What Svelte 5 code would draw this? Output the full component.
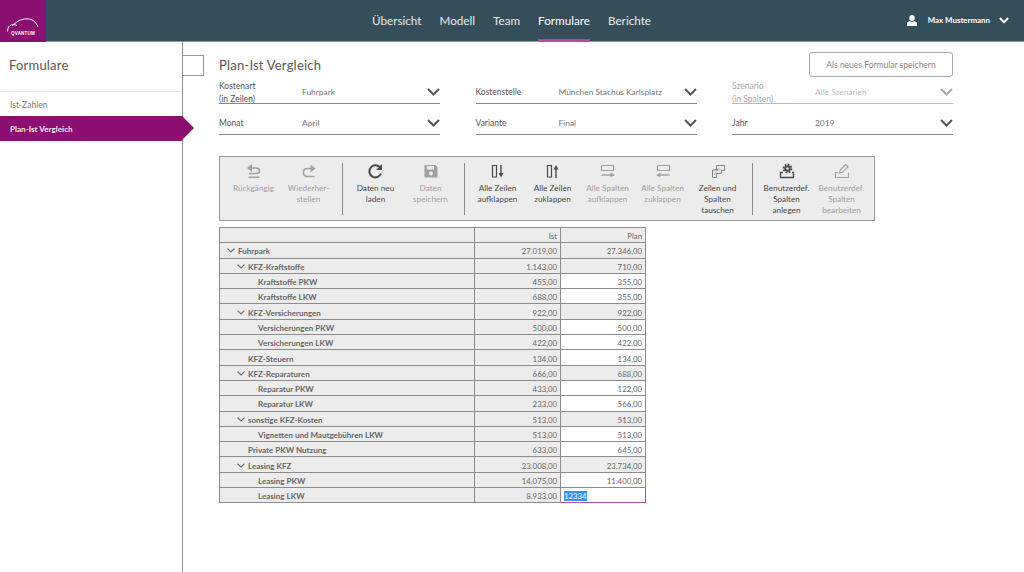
<script>
  const nav = ["Übersicht", "Modell", "Team", "Formulare", "Berichte"];

  const fields = [
    { label: "Kostenart", sub: "(in Zeilen)", value: "Fuhrpark" },
    { label: "Kostenstelle", value: "München Stachus Karlsplatz" },
    { label: "Szenario", sub: "(in Spalten)", value: "Alle Szenarien", off: true },
    { label: "Monat", value: "April" },
    { label: "Variante", value: "Final" },
    { label: "Jahr", value: "2019" }
  ];

  const groups = [
    [
      { icon: "undo", lines: ["Rückgängig"], off: true },
      { icon: "redo", lines: ["Wiederher-", "stellen"], off: true }
    ],
    [
      { icon: "reload", lines: ["Daten neu", "laden"] },
      { icon: "save", lines: ["Daten", "speichern"], off: true }
    ],
    [
      { icon: "rowsOpen", lines: ["Alle Zeilen", "aufklappen"] },
      { icon: "rowsClose", lines: ["Alle Zeilen", "zuklappen"] },
      { icon: "colsOpen", lines: ["Alle Spalten", "aufklappen"], off: true },
      { icon: "colsClose", lines: ["Alle Spalten", "zuklappen"], off: true },
      { icon: "swap", lines: ["Zeilen und", "Spalten", "tauschen"] }
    ],
    [
      { icon: "gear", lines: ["Benutzerdef.", "Spalten", "anlegen"] },
      { icon: "pencil", lines: ["Benutzerdef.", "Spalten", "bearbeiten"], off: true }
    ]
  ];

  const rows = [
    { name: "Fuhrpark", level: 0, open: true, ist: "27.019,00", plan: "27.346,00" },
    { name: "KFZ-Kraftstoffe", level: 1, open: true, ist: "1.143,00", plan: "710,00" },
    { name: "Kraftstoffe PKW", level: 2, ist: "455,00", plan: "355,00", edit: true },
    { name: "Kraftstoffe LKW", level: 2, ist: "688,00", plan: "355,00", edit: true },
    { name: "KFZ-Versicherungen", level: 1, open: true, ist: "922,00", plan: "922,00" },
    { name: "Versicherungen PKW", level: 2, ist: "500,00", plan: "500,00", edit: true },
    { name: "Versicherungen LKW", level: 2, ist: "422,00", plan: "422,00", edit: true },
    { name: "KFZ-Steuern", level: 1, ist: "134,00", plan: "134,00", edit: true },
    { name: "KFZ-Reparaturen", level: 1, open: true, ist: "666,00", plan: "688,00" },
    { name: "Reparatur PKW", level: 2, ist: "433,00", plan: "122,00", edit: true },
    { name: "Reparatur LKW", level: 2, ist: "233,00", plan: "566,00", edit: true },
    { name: "sonstige KFZ-Kosten", level: 1, open: true, ist: "513,00", plan: "513,00" },
    { name: "Vignetten und Mautgebühren LKW", level: 2, ist: "513,00", plan: "513,00", edit: true },
    { name: "Private PKW Nutzung", level: 1, ist: "633,00", plan: "645,00", edit: true },
    { name: "Leasing KFZ", level: 1, open: true, ist: "23.008,00", plan: "23.734,00" },
    { name: "Leasing PKW", level: 2, ist: "14.075,00", plan: "11.400,00", edit: true },
    { name: "Leasing LKW", level: 2, ist: "8.933,00", active: "12334" }
  ];
</script>

<div class="page">
  <header class="topbar">
    <div class="logo">
      <svg width="32" height="14" viewBox="0 0 32 14" fill="none" stroke="#fff" stroke-width="1">
        <path d="M.6 13.500C.6 9.500 2 7.500 4.500 7c2-.4 4-.2 5.500.5" />
        <path d="M5 7.500C9 5 12 1 20 .8c5-.1 9 3.200 11 8" />
      </svg>
      <span>QVANTUM</span>
    </div>
    <nav class="mainnav">
      {#each nav as item}
        <a class:current={item === "Formulare"} href="#top">{item}</a>
      {/each}
    </nav>
    <div class="user">
      <svg width="10" height="11" viewBox="0 0 10 11" fill="#fff">
        <ellipse cx="5" cy="3" rx="2.700" ry="3" />
        <path d="M0 11V8.500C0 7 1.500 6.500 3 6.200c1.200.8 2.800.8 4 0C8.500 6.500 10 7 10 8.500V11z" />
      </svg>
      <b>Max Mustermann</b>
      <svg class="userchev" width="10" height="7" viewBox="0 0 10 7" fill="none" stroke="#fff" stroke-width="1.800">
        <path d="M.8 1l4.200 4.200L9.200 1" />
      </svg>
    </div>
  </header>

  <div class="body">
    <aside class="sidebar">
      <h2>Formulare</h2>
      <ul>
        <li>Ist-Zahlen</li>
        <li class="active">Plan-Ist Vergleich</li>
      </ul>
    </aside>

    <div class="stub"></div>

    <main class="content">
      <div class="titlerow">
        <h1>Plan-Ist Vergleich</h1>
        <button type="button" class="savebtn">Als neues Formular speichern</button>
      </div>

      <div class="fields">
        {#each fields as f}
          <div class="field" class:off={f.off}>
            <div class="flabel" class:two={f.sub}>{f.label}{#if f.sub}<br />{f.sub}{/if}</div>
            <div class="fvalue">{f.value}</div>
            <svg width="13" height="8" viewBox="0 0 13 8" fill="none" stroke="currentColor" stroke-width="2">
              <path d="M1 1l5.500 5.500L12 1" />
            </svg>
          </div>
        {/each}
      </div>

      <div class="toolbar">
        {#each groups as group, g}
          {#if g > 0}<div class="sep" class:wide={g === 3}></div>{/if}
          {#each group as tool}
            <div class="tool" class:off={tool.off}>
              <svg width="18" height="16" viewBox="0 0 18 16" fill="none" stroke="currentColor" stroke-width="1.200">
                {#if tool.icon === "undo"}
                  <path d="M5 5h6.500c2 0 3 1 3 2.700s-1 2.800-3 2.800H4" stroke-width="1.600" />
                  <path d="M7 1v8L2 5z" fill="currentColor" stroke="none" />
                  <path d="M3.500 14.300h11" stroke-width="1.400" />
                {:else if tool.icon === "redo"}
                  <path d="M12.500 5.500H7.500c-2.800 0-4 1.600-4 4s1.200 4 4 4h7" stroke-width="1.600" />
                  <path d="M10.500 1.500v8L15.500 5.500z" fill="currentColor" stroke="none" />
                {:else if tool.icon === "reload"}
                  <path d="M14 10.500A6 6 0 1 1 12.800 4.300" stroke-width="2" />
                  <path d="M15 1v6H9z" fill="currentColor" stroke="none" />
                {:else if tool.icon === "save"}
                  <path d="M2.500 2h11l2 2v10.500h-13z" fill="currentColor" stroke="none" />
                  <path d="M5 3h7v3.500H5z" fill="#ececec" stroke="none" />
                  <circle cx="9" cy="10.500" r="2" fill="#ececec" stroke="none" />
                {:else if tool.icon === "rowsOpen"}
                  <path d="M3.500 2.500h4v11.500h-4z" />
                  <path d="M12 2v10" stroke-width="1.400" />
                  <path d="M9.500 10h5L12 14.500z" fill="currentColor" stroke="none" />
                {:else if tool.icon === "rowsClose"}
                  <path d="M3.500 2.500h4v11.500h-4z" />
                  <path d="M12 5v10" stroke-width="1.400" />
                  <path d="M9.500 6.500h5L12 2z" fill="currentColor" stroke="none" />
                {:else if tool.icon === "colsOpen"}
                  <path d="M2.500 2.500h12v5h-12z" />
                  <path d="M2.500 12h10" stroke-width="1.400" />
                  <path d="M11.500 9.500v5L16 12z" fill="currentColor" stroke="none" />
                {:else if tool.icon === "colsClose"}
                  <path d="M3.500 2.500h12v5h-12z" />
                  <path d="M5.500 12h10" stroke-width="1.400" />
                  <path d="M6.500 9.500v5L2 12z" fill="currentColor" stroke="none" />
                {:else if tool.icon === "swap"}
                  <g stroke="#777" stroke-width=".9">
                    <path d="M7.500 7V2.500h8v5h-3v3h-5" />
                    <path d="M7.500 7h-4v7.500h4v-4" />
                    <path d="M7.500 7l5 0M9.500 5.500l-4 6" stroke-dasharray="1.200 .8" />
                  </g>
                {:else if tool.icon === "gear"}
                  <circle cx="9.500" cy="5.500" r="4" stroke-width="1.800" stroke-dasharray="1.800 1.300" />
                  <circle cx="9.500" cy="5.500" r="3.300" fill="currentColor" stroke="none" />
                  <circle cx="9.500" cy="5.500" r="1.200" fill="#ececec" stroke="none" />
                  <path d="M5 9.500H2.500v5h13v-5H14" stroke-width="1.300" />
                {:else}
                  <path d="M5 9.500H2.500v5h13v-5" />
                  <path d="M6.500 10l.8-3L12.500 1.500l2.500 2.300-5.500 5.500z" />
                {/if}
              </svg>
              {#each tool.lines as line}<span>{line}</span>{/each}
            </div>
          {/each}
        {/each}
      </div>

      <table class="grid">
        <colgroup><col class="c1" /><col class="c2" /><col class="c3" /></colgroup>
        <thead>
          <tr><th></th><th>Ist</th><th>Plan</th></tr>
        </thead>
        <tbody>
          {#each rows as r}
            <tr>
              <td class="name l{r.level}">
                {#if r.level < 2}
                  <span class="slot">
                    {#if r.open}
                      <svg width="8" height="5" viewBox="0 0 8 5" fill="none" stroke="currentColor" stroke-width="1.100">
                        <path d="M.5.700L4 4 7.500.700" />
                      </svg>
                    {/if}
                  </span>
                {/if}{r.name}
              </td>
              <td>{r.ist}</td>
              {#if r.active}
                <td class="cur"><span>{r.active}</span></td>
              {:else}
                <td class:edit={r.edit}>{r.plan}</td>
              {/if}
            </tr>
          {/each}
        </tbody>
      </table>
    </main>
  </div>
</div>

<style>
  :global(body) {
    margin: 0;
    background: #fff;
    font-family: "Lato", "Noto Sans", sans-serif;
    color: #555;
  }

  .page {
    width: 1024px;
    height: 572px;
    display: flex;
    flex-direction: column;
    overflow: hidden;
  }

  .topbar {
    height: 41px;
    flex: none;
    display: flex;
    align-items: stretch;
    background: #354e5c;
    border-bottom: 1px solid #8a9aa3;
    position: relative;
  }

  .logo {
    width: 46px;
    height: 42px;
    background: #8a0f70;
    display: flex;
    flex-direction: column;
    align-items: center;
    padding-top: 18px;
    box-sizing: border-box;
    color: #fff;
  }

  .logo span {
    font-family: "Liberation Sans", sans-serif;
    font-size: 4.500px;
    font-weight: 700;
    line-height: 5px;
    letter-spacing: 0.2px;
    margin-top: -1px;
  }

  .mainnav {
    flex: 1;
    display: flex;
    gap: 18px;
    margin-left: 326px;
  }

  .mainnav a {
    color: #e6eaec;
    text-decoration: none;
    font-size: 11.700px;
    line-height: 40px;
    height: 42px;
    box-sizing: border-box;
  }

  .mainnav a.current {
    color: #fff;
    border-bottom: 3px solid #b64a9b;
  }

  .user {
    position: absolute;
    right: 15px;
    top: 15px;
    display: flex;
    align-items: center;
    color: #fff;
  }

  .user b {
    font-size: 7.900px;
    margin-left: 11px;
    line-height: 11px;
  }

  .userchev {
    margin-left: 9px;
  }

  .body {
    flex: 1;
    display: flex;
    align-items: flex-start;
    min-height: 0;
  }

  .sidebar {
    width: 182px;
    height: 100%;
    flex: none;
    border-right: 1px solid #8c8c8c;
  }

  .sidebar h2 {
    margin: 0;
    height: 35px;
    padding: 14px 0 0 9px;
    font-size: 13px;
    line-height: 18px;
    font-weight: 400;
    color: #555;
    border-bottom: 1px solid #e4e4e4;
    letter-spacing: 0.2px;
  }

  .sidebar ul {
    list-style: none;
    margin: 0;
    padding: 0;
  }

  .sidebar li {
    height: 23px;
    padding: 1px 0 0 10px;
    font-size: 8.500px;
    line-height: 24px;
    color: #777;
  }

  .sidebar li.active {
    position: relative;
    height: 24px;
    line-height: 25px;
    background: #8a0f70;
    color: #eee;
    font-size: 8.100px;
    font-weight: 700;
  }

  .sidebar li.active::after {
    content: "";
    position: absolute;
    left: 100%;
    top: 0;
    border-left: 12px solid #8a0f70;
    border-top: 12.500px solid transparent;
    border-bottom: 12.500px solid transparent;
  }

  .stub {
    width: 20px;
    height: 19px;
    flex: none;
    margin-top: 13px;
    border: 1px solid #999;
    border-left: 0;
  }

  .content {
    width: 734px;
    margin-left: 15px;
    flex: none;
  }

  .titlerow {
    display: flex;
    justify-content: space-between;
    align-items: flex-start;
    height: 31px;
    padding-top: 10px;
    box-sizing: border-box;
  }

  .titlerow h1 {
    margin: 4px 0 0;
    font-size: 13px;
    line-height: 18px;
    font-weight: 400;
    color: #555;
    letter-spacing: 0.2px;
  }

  .savebtn {
    width: 144px;
    height: 25px;
    padding: 0;
    background: #fff;
    border: 1px solid #aaa;
    border-radius: 3px;
    color: #888;
    font: inherit;
    font-size: 8.500px;
  }

  .fields {
    display: grid;
    grid-template-columns: repeat(3, 221px);
    column-gap: 35.500px;
    grid-auto-rows: 31px;
  }

  .field {
    display: flex;
    align-items: flex-end;
    border-bottom: 1px solid #888;
    padding-bottom: 1px;
    box-sizing: border-box;
    color: #555;
    position: relative;
  }

  .field.off {
    color: #aaa;
    border-bottom-color: #bbb;
  }

  .field svg {
    position: absolute;
    right: 0;
    bottom: 7px;
  }

  .flabel {
    width: 83px;
    flex: none;
    font-size: 8.500px;
    line-height: 12.500px;
    padding-bottom: 4px;
  }

  .flabel.two {
    padding-bottom: 0;
    margin-bottom: -3px;
  }

  .fvalue {
    font-size: 8.400px;
    line-height: 12.500px;
    padding-bottom: 4px;
    color: #777;
  }

  .field.off .fvalue {
    color: #bbb;
  }

  .toolbar {
    width: 656px;
    height: 65px;
    box-sizing: border-box;
    margin-top: 21px;
    display: flex;
    padding: 0 0 0 6px;
    background: #ececec;
    border: 1px solid #999;
  }

  .sep {
    width: 1px;
    height: 52px;
    margin: 6px 5.500px 0;
    background: #888;
    flex: none;
  }

  .sep.wide {
    margin: 6px 6.500px 0;
  }

  .tool {
    width: 55px;
    flex: none;
    display: flex;
    flex-direction: column;
    align-items: center;
    padding-top: 6px;
    color: #4a4a4a;
    font-size: 8.200px;
    line-height: 11px;
    white-space: nowrap;
  }

  .tool svg {
    margin-bottom: 4px;
  }

  .tool.off {
    color: #a0a0a0;
  }

  .grid {
    margin-top: 6px;
    width: 426px;
    table-layout: fixed;
    border-collapse: collapse;
    font-size: 7.800px;
    color: #666;
  }

  .c1 {
    width: 255px;
  }

  .c2 {
    width: 86px;
  }

  .c3 {
    width: 85px;
  }

  .grid th,
  .grid td {
    height: 12.300px;
    padding: 2px 3px 0 0;
    border: 1px solid #8c8c8c;
    background: #ececec;
    text-align: right;
    font-weight: 400;
    line-height: 10px;
    overflow: hidden;
    white-space: nowrap;
  }

  .grid td.name {
    text-align: left;
    font-size: 8px;
    font-weight: 700;
    color: #666;
  }

  .grid td.l0 {
    padding-left: 7px;
  }

  .grid td.l1 {
    padding-left: 17px;
  }

  .grid td.l2 {
    padding-left: 38px;
  }

  .slot {
    display: inline-block;
    width: 11px;
  }

  .slot svg {
    vertical-align: 1px;
  }

  .grid td.edit {
    background: #fff;
  }

  .grid td.cur {
    background: #fff;
    text-align: left;
    padding-left: 3px;
    border-color: #b64a9b;
  }

  .cur span {
    background: #3390ff;
    color: #fff;
  }
</style>
